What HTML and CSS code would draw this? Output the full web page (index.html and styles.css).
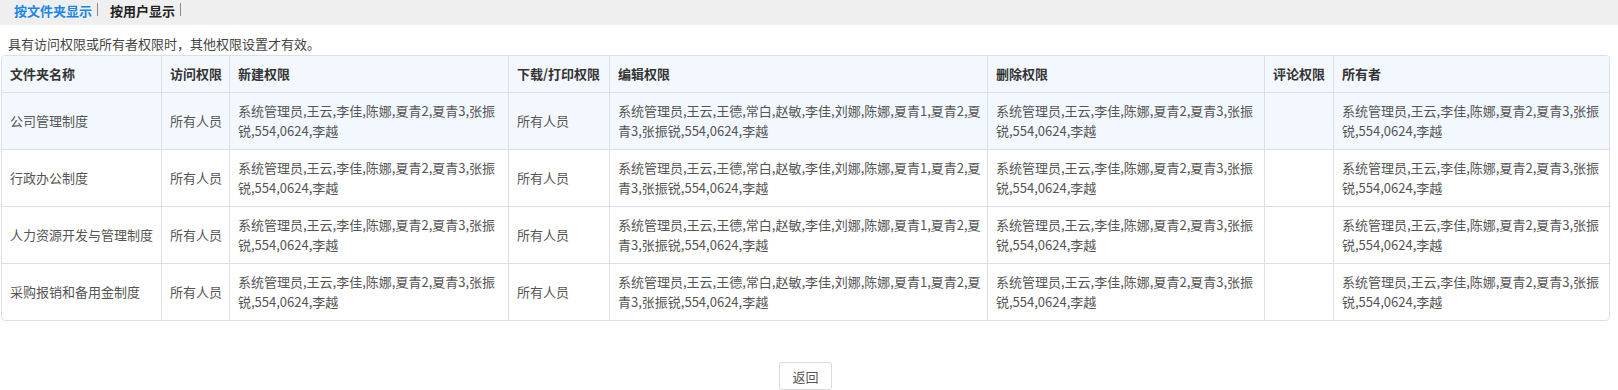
FILE: index.html
```html
<!DOCTYPE html>
<html lang="zh-CN">
<head>
<meta charset="utf-8">
<title>权限查看</title>
<link rel="stylesheet" href="styles.css">
</head>
<body>
<div class="tabbar">
  <span class="tab tab-active">按文件夹显示</span>
  <span class="tab">按用户显示</span>
</div>
<div class="page">
  <p class="notice">具有访问权限或所有者权限时，其他权限设置才有效。</p>
  <div class="table-wrap">
    <table class="perm-table">
      <colgroup>
        <col class="c-name">
        <col class="c-visit">
        <col class="c-new">
        <col class="c-down">
        <col class="c-edit">
        <col class="c-del">
        <col class="c-comment">
        <col class="c-owner">
      </colgroup>
      <thead>
        <tr>
          <th>文件夹名称</th>
          <th>访问权限</th>
          <th>新建权限</th>
          <th>下载/打印权限</th>
          <th>编辑权限</th>
          <th>删除权限</th>
          <th>评论权限</th>
          <th>所有者</th>
        </tr>
      </thead>
      <tbody>
        <tr class="row-hover">
          <td>公司管理制度</td>
          <td>所有人员</td>
          <td>系统管理员,王云,李佳,陈娜,夏青2,夏青3,张振锐,554,0624,李越</td>
          <td>所有人员</td>
          <td>系统管理员,王云,王德,常白,赵敏,李佳,刘娜,陈娜,夏青1,夏青2,夏青3,张振锐,554,0624,李越</td>
          <td>系统管理员,王云,李佳,陈娜,夏青2,夏青3,张振锐,554,0624,李越</td>
          <td></td>
          <td>系统管理员,王云,李佳,陈娜,夏青2,夏青3,张振锐,554,0624,李越</td>
        </tr>
        <tr>
          <td>行政办公制度</td>
          <td>所有人员</td>
          <td>系统管理员,王云,李佳,陈娜,夏青2,夏青3,张振锐,554,0624,李越</td>
          <td>所有人员</td>
          <td>系统管理员,王云,王德,常白,赵敏,李佳,刘娜,陈娜,夏青1,夏青2,夏青3,张振锐,554,0624,李越</td>
          <td>系统管理员,王云,李佳,陈娜,夏青2,夏青3,张振锐,554,0624,李越</td>
          <td></td>
          <td>系统管理员,王云,李佳,陈娜,夏青2,夏青3,张振锐,554,0624,李越</td>
        </tr>
        <tr>
          <td>人力资源开发与管理制度</td>
          <td>所有人员</td>
          <td>系统管理员,王云,李佳,陈娜,夏青2,夏青3,张振锐,554,0624,李越</td>
          <td>所有人员</td>
          <td>系统管理员,王云,王德,常白,赵敏,李佳,刘娜,陈娜,夏青1,夏青2,夏青3,张振锐,554,0624,李越</td>
          <td>系统管理员,王云,李佳,陈娜,夏青2,夏青3,张振锐,554,0624,李越</td>
          <td></td>
          <td>系统管理员,王云,李佳,陈娜,夏青2,夏青3,张振锐,554,0624,李越</td>
        </tr>
        <tr>
          <td>采购报销和备用金制度</td>
          <td>所有人员</td>
          <td>系统管理员,王云,李佳,陈娜,夏青2,夏青3,张振锐,554,0624,李越</td>
          <td>所有人员</td>
          <td>系统管理员,王云,王德,常白,赵敏,李佳,刘娜,陈娜,夏青1,夏青2,夏青3,张振锐,554,0624,李越</td>
          <td>系统管理员,王云,李佳,陈娜,夏青2,夏青3,张振锐,554,0624,李越</td>
          <td></td>
          <td>系统管理员,王云,李佳,陈娜,夏青2,夏青3,张振锐,554,0624,李越</td>
        </tr>
      </tbody>
    </table>
  </div>
  <div class="actions">
    <button class="btn" type="button">返回</button>
  </div>
</div>
</body>
</html>
```

FILE: styles.css
```css
* {
  box-sizing: border-box;
}

html, body {
  margin: 0;
  padding: 0;
  background: #fff;
}

body {
  font-family: "Microsoft YaHei", "Noto Sans CJK SC", "Noto Sans", sans-serif;
  font-size: 13px;
  color: #555;
}

.tabbar {
  display: flex;
  align-items: flex-start;
  height: 25px;
  background: #efefef;
  padding: 3px 0 0 14px;
}

.tab {
  display: block;
  height: 13px;
  line-height: 15px;
  padding-right: 5px;
  margin-right: 12px;
  border-right: 1px solid #8a8a8a;
  color: #222;
  font-weight: bold;
  white-space: nowrap;
}

.tab-active {
  color: #1a86e8;
}

.page {
  margin: 0 8px 0 1px;
}

.notice {
  margin: 0;
  padding: 9px 0 0 7px;
  line-height: 20px;
  color: #444;
}

.table-wrap {
  margin-top: 1px;
  border: 1px solid #dcdfe6;
  border-radius: 4px;
  overflow: hidden;
}

.perm-table {
  width: 100%;
  table-layout: fixed;
  border-collapse: separate;
  border-spacing: 0;
}

.c-name { width: 160px; }
.c-visit { width: 68px; }
.c-new { width: 279px; }
.c-down { width: 101px; }
.c-edit { width: 378px; }
.c-del { width: 277px; }
.c-comment { width: 69px; }
.c-owner { width: auto; }

.perm-table th,
.perm-table td {
  padding: 8px 6px 8px 8px;
  line-height: 20px;
  text-align: left;
  vertical-align: middle;
  border-right: 1px solid #dcdfe6;
  border-bottom: 1px solid #dcdfe6;
  word-break: break-all;
}

.perm-table th:last-child,
.perm-table td:last-child {
  border-right: none;
}

.perm-table tbody tr:last-child td {
  border-bottom: none;
}

.perm-table th {
  background: #f3f8fe;
  color: #333;
  font-weight: bold;
  white-space: nowrap;
}

.perm-table td {
  color: #555;
}

.perm-table .row-hover td {
  background: #f3f8fe;
}

.actions {
  display: flex;
  justify-content: center;
  padding-top: 41px;
}

.btn {
  height: 28px;
  padding: 0 12px;
  font-family: inherit;
  font-size: 13px;
  color: #555;
  background: #fff;
  border: 1px solid #d9d9d9;
  border-radius: 3px;
  cursor: pointer;
}
```
